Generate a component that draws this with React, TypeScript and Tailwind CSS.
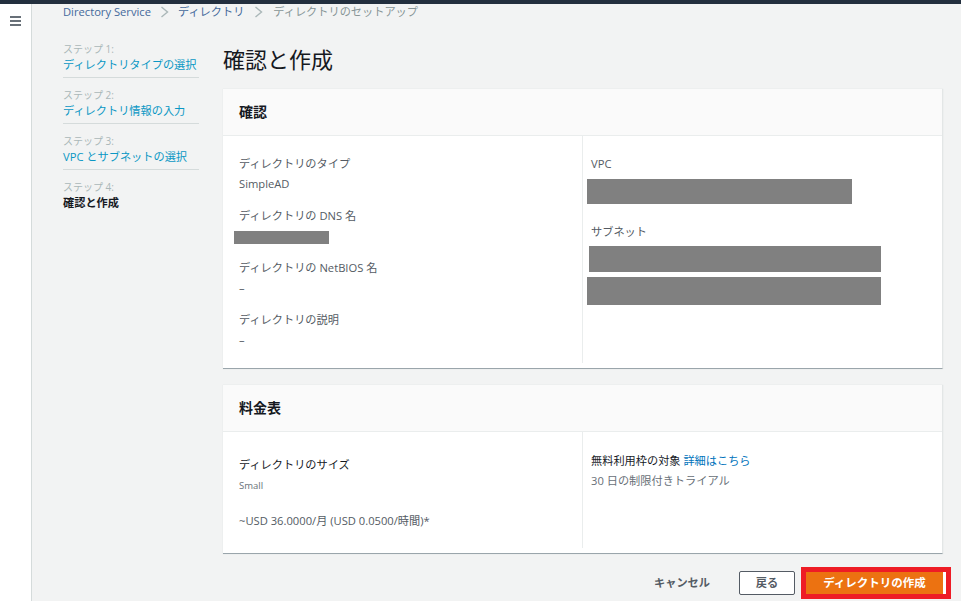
const font = { fontFamily: '"Open Sans", "Noto Sans CJK JP", sans-serif' };

function Step({ n, label, current, last }: { n: number; label: string; current?: boolean; last?: boolean }) {
  return (
    <div className={`h-[46px] pt-[10px] ${last ? '' : 'border-b border-[#d5dbdb]'}`}>
      <div className="text-[10px] leading-[14px] text-[#aab7b8]">ステップ {n}:</div>
      <div className={`text-[11.2px] leading-[18px] whitespace-nowrap ${current ? 'font-bold text-[#16191f]' : 'text-[#0a97c4]'}`}>{label}</div>
    </div>
  );
}

function Field({ label, value, children }: { label: string; value?: string; children?: React.ReactNode }) {
  return (
    <div className="h-[52px]">
      <div className="text-[11.2px] leading-[20px] text-[#545b64]">{label}</div>
      <div className="relative text-[11.2px] leading-[20px] text-[#545b64]">{value}{children}</div>
    </div>
  );
}

function Card({ title, height, children }: { title: string; height: string; children: React.ReactNode }) {
  return (
    <section className={`${height} flex flex-col bg-white border-b border-b-[#9aa5ab] border-r border-r-[#e3e6e6] shadow-[0_0_1px_#d5dbdb]`}>
      <h2 className="h-[47px] shrink-0 flex items-center pl-4 pb-[2px] bg-[#fafafa] border-b border-[#eaeded] text-[14px] font-bold text-[#16191f]">{title}</h2>
      <div className="flex-1 flex pb-[5px]">{children}</div>
    </section>
  );
}

export default function App() {
  return (
    <div style={font} className="w-[961px] h-[601px] overflow-hidden flex flex-col bg-[#f2f3f3]">
      <div className="h-[4px] shrink-0 bg-[#232f3e]" />
      <div className="flex-1 flex min-h-0">
        {/* Side rail */}
        <div className="w-[32px] shrink-0 bg-white border-r border-[#d5dbdb] pt-[12px] pl-[10px]">
          <div className="w-[11px] flex flex-col gap-[2px]">
            <span className="h-[2px] bg-[#687078]" />
            <span className="h-[2px] bg-[#687078]" />
            <span className="h-[2px] bg-[#687078]" />
          </div>
        </div>

        <div className="flex-1 pl-[31px] pr-[18px]">
          {/* Breadcrumb */}
          <div className="h-[16px] flex items-center text-[11.2px] leading-[16px]">
            <span className="text-[#44699b]">Directory Service</span>
            <svg className="mx-[9px]" width="9" height="12" viewBox="0 0 9 12" fill="none" stroke="#aab7b8" strokeWidth="1.4"><path d="M1.5 1l6 5-6 5" /></svg>
            <span className="text-[#44699b]">ディレクトリ</span>
            <svg className="mx-[10px]" width="9" height="12" viewBox="0 0 9 12" fill="none" stroke="#aab7b8" strokeWidth="1.4"><path d="M1.5 1l6 5-6 5" /></svg>
            <span className="text-[#879596]">ディレクトリのセットアップ</span>
          </div>

          <div className="flex gap-[24px] mt-[12px]">
            {/* Steps */}
            <nav className="w-[136px] shrink-0">
              <Step n={1} label="ディレクトリタイプの選択" />
              <Step n={2} label="ディレクトリ情報の入力" />
              <Step n={3} label="VPC とサブネットの選択" />
              <Step n={4} label="確認と作成" current last />
            </nav>

            <main className="flex-1">
              <h1 className="h-[47px] text-[22px] leading-[34px] text-[#16191f] mt-[10px]">確認と作成</h1>

              <Card title="確認" height="h-[280px]">
                <div className="w-[360px] border-r border-[#eaeded] pl-4 pt-[18px]">
                  <Field label="ディレクトリのタイプ" value="SimpleAD" />
                  <Field label="ディレクトリの DNS 名">
                    <div className="absolute left-[-5px] top-[5px] w-[95px] h-[13px] bg-[#808080]" />
                  </Field>
                  <Field label="ディレクトリの NetBIOS 名" value="–" />
                  <Field label="ディレクトリの説明" value="–" />
                </div>
                <div className="flex-1 pl-[8px] pt-[18px] text-[#545b64]">
                  <div className="text-[11.2px] leading-[20px]">VPC</div>
                  <div className="relative h-[48px]">
                    <div className="absolute left-[-4px] top-[5px] w-[265px] h-[25px] bg-[#808080]" />
                  </div>
                  <div className="text-[11.2px] leading-[20px]">サブネット</div>
                  <div className="relative">
                    <div className="absolute left-[-2px] top-[4px] w-[292px] h-[26px] bg-[#808080]" />
                    <div className="absolute left-[-4px] top-[35px] w-[294px] h-[28px] bg-[#808080]" />
                  </div>
                </div>
              </Card>

              <div className="h-[16px]" />

              <Card title="料金表" height="h-[169px]">
                <div className="w-[360px] border-r border-[#eaeded] pl-4 pt-[22px]">
                  <div className="text-[11.2px] leading-[22px] text-[#16191f]">ディレクトリのサイズ</div>
                  <div className="text-[9.5px] leading-[20px] text-[#687078]">Small</div>
                  <div className="mt-[15px] text-[11.2px] leading-[20px] text-[#545b64]">~USD 36.0000/月 (USD 0.0500/時間)*</div>
                </div>
                <div className="flex-1 pl-[8px] pt-[19px]">
                  <div className="text-[11.2px] leading-[20px] text-[#16191f]">無料利用枠の対象 <span className="text-[#0073bb]">詳細はこちら</span></div>
                  <div className="text-[11.2px] leading-[20px] text-[#687078]">30 日の制限付きトライアル</div>
                </div>
              </Card>

              {/* Actions */}
              <div className="flex items-center justify-end mt-[13px] -mr-[8px]">
                <span className="text-[11.2px] font-bold text-[#545b64] mr-[29px]">キャンセル</span>
                <button className="w-[56px] h-[24px] bg-white border border-[#545b64] rounded-[2px] text-[11.2px] font-bold text-[#545b64] mr-[6px]">戻る</button>
                <div className="w-[150px] h-[32px] border-[5px] border-[#ee1c25] bg-white pr-[3px]">
                  <button className="block w-full h-full bg-[#ec7211] text-[11.5px] font-bold text-white">ディレクトリの作成</button>
                </div>
              </div>
            </main>
          </div>
        </div>
      </div>
    </div>
  );
}
